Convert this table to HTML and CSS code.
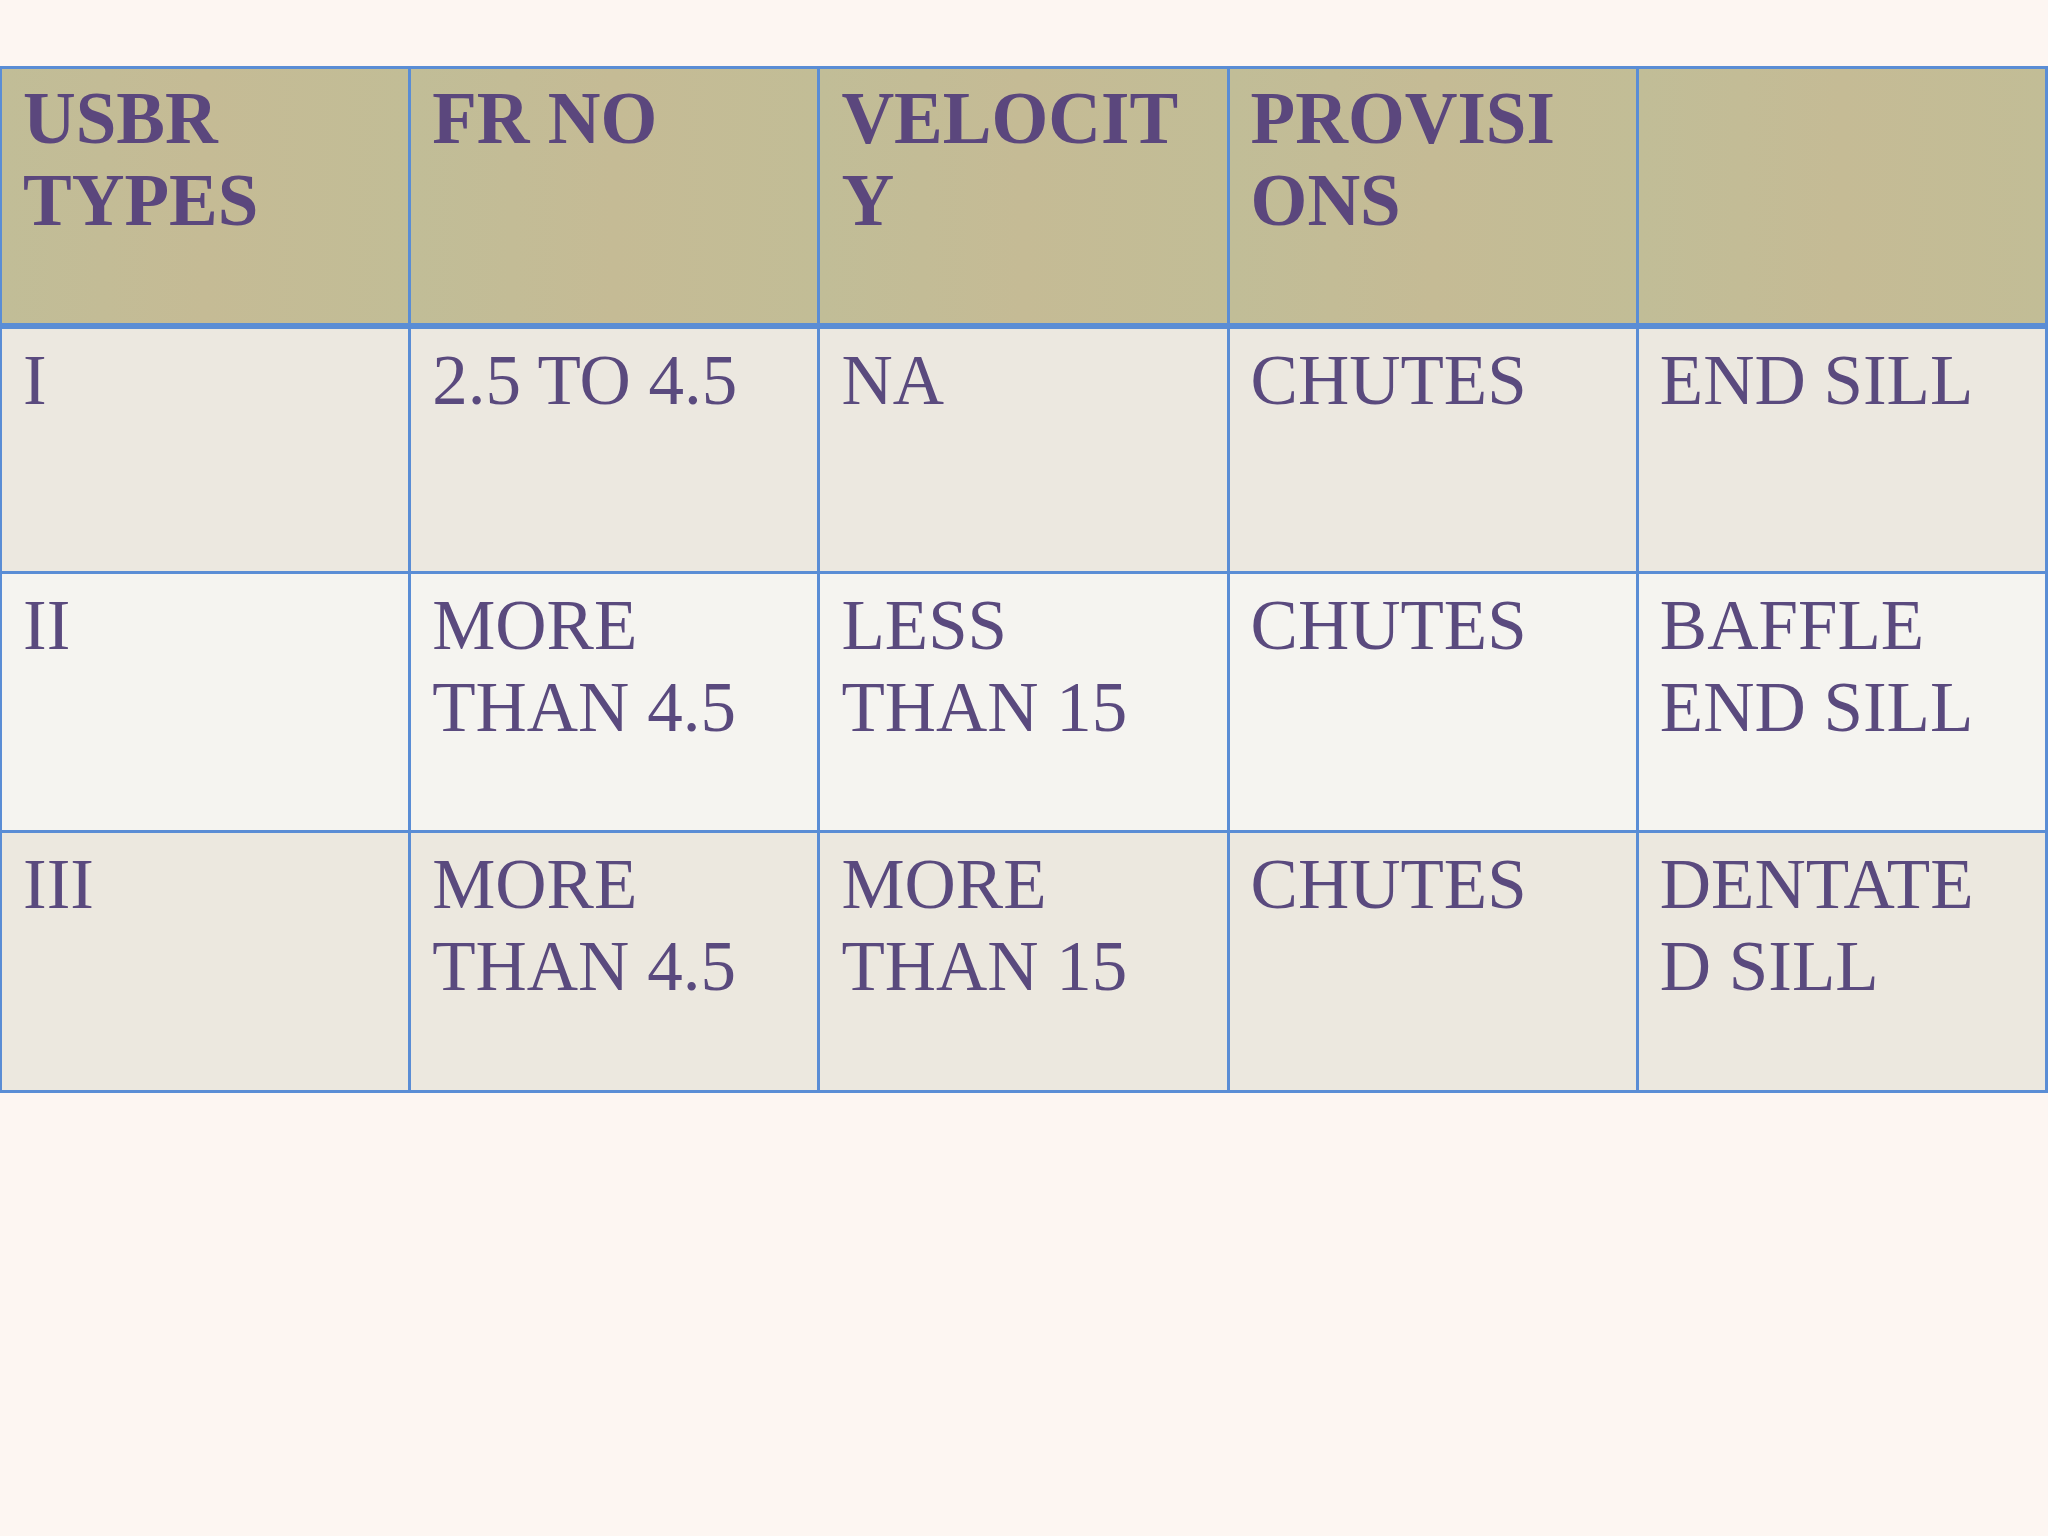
FILE: index.html
```html
<!DOCTYPE html>
<html lang="en">
<head>
<meta charset="utf-8">
<title>USBR Types</title>
<link rel="stylesheet" href="styles.css">
</head>
<body>
<div class="slide">
  <div class="table">
    <div class="cell head">USBR<br>TYPES</div>
    <div class="cell head">FR NO</div>
    <div class="cell head">VELOCIT<br>Y</div>
    <div class="cell head">PROVISI<br>ONS</div>
    <div class="cell head"></div>

    <div class="cell r1">I</div>
    <div class="cell r1">2.5 TO 4.5</div>
    <div class="cell r1">NA</div>
    <div class="cell r1">CHUTES</div>
    <div class="cell r1">END SILL</div>

    <div class="cell r2">II</div>
    <div class="cell r2">MORE<br>THAN 4.5</div>
    <div class="cell r2">LESS<br>THAN 15</div>
    <div class="cell r2">CHUTES</div>
    <div class="cell r2">BAFFLE<br>END SILL</div>

    <div class="cell r3">III</div>
    <div class="cell r3">MORE<br>THAN 4.5</div>
    <div class="cell r3">MORE<br>THAN 15</div>
    <div class="cell r3">CHUTES</div>
    <div class="cell r3">DENTATE<br>D SILL</div>
  </div>
</div>
</body>
</html>
```
FILE: styles.css
```css
html, body {
  margin: 0;
  padding: 0;
  background: #fdf6f2;
}

.slide {
  width: 2048px;
  height: 1536px;
  padding-top: 66px;
  box-sizing: border-box;
  font-family: "Liberation Serif", "Times New Roman", serif;
  color: #5a4a7e;
}

.table {
  display: grid;
  grid-template-columns: repeat(5, 1fr);
  grid-template-rows: 260px 245px 259px 260px;
  border-top: 3px solid #5a8dd5;
  border-left: 2px solid #5a8dd5;
  width: 2048px;
  box-sizing: border-box;
}

.cell {
  box-sizing: border-box;
  border-right: 3px solid #5a8dd5;
  border-bottom: 3px solid #5a8dd5;
  padding: 10px 18px 0 21px;
  font-size: 71px;
  line-height: 82px;
  white-space: nowrap;
  font-variant-numeric: oldstyle-nums;
}

.head {
  background: linear-gradient(90deg, #c1bd97 0%, #c5bb95 50%, #c2bd96 100%);
  font-weight: bold;
  font-size: 73px;
  color: #5b477d;
  border-bottom-width: 6px;
  padding-top: 9px;
}

.r1 {
  background: #ece8e0;
}

.r2 {
  background: #f5f4f0;
}

.r3 {
  background: #ece8df;
}
```
